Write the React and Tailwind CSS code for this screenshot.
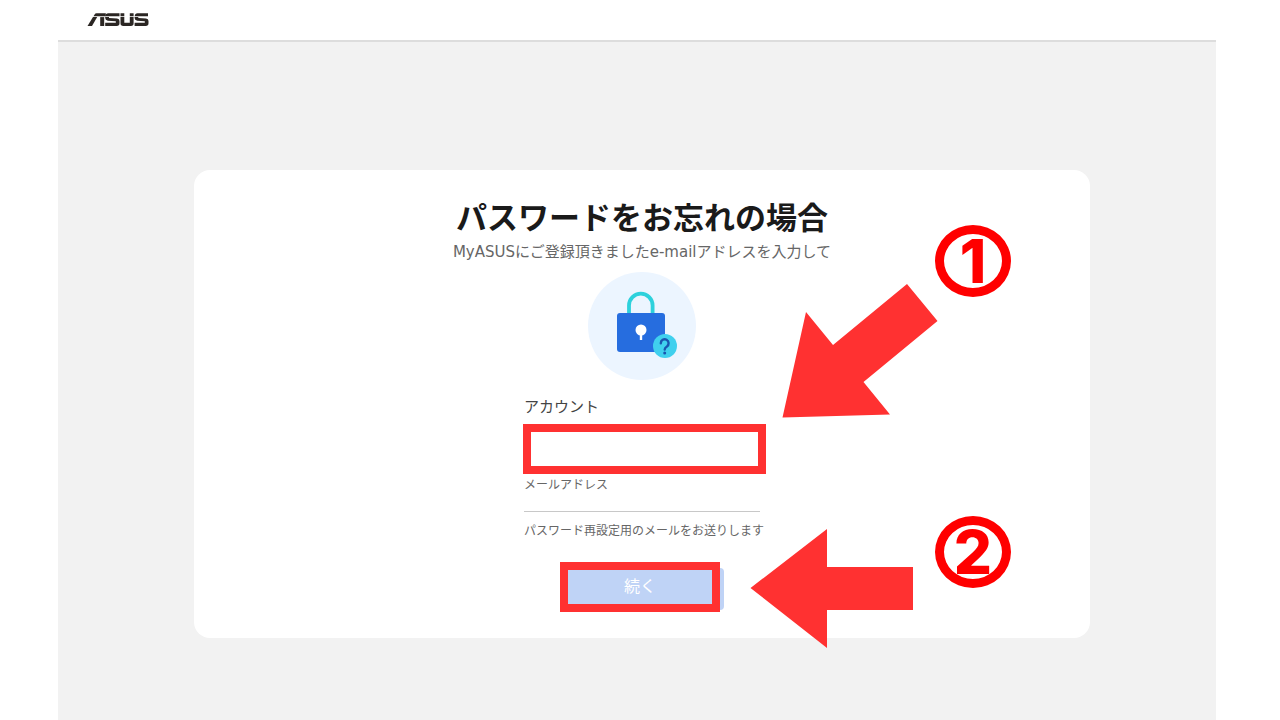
const RED = "#ff3131";

function AsusLogo() {
  return (
    <svg viewBox="0 0 62 14" className="h-3.5 w-[62px]" role="img" aria-label="ASUS">
      <g fill="#2b2623">
        <path d="M6.500 3.300 7.600 1.500Q8.200 0.300 9.600 0.300H18.800V3.300Z" />
        <path d="M6 4.100H10.200L5 13H0.500Z" />
        <path d="M13.200 4.100H17.200V13H13.200Z" />
        <path d="M18.300 3.300Q18.500 0.300 21.300 0.300H32.500V3.300Z" />
        <path d="M18.200 4.100H22V4.900L30 5.500Q32.500 5.800 32.500 8V10.300Q32.500 13 29.800 13H18.200V9.700H28.800V8.300L20.800 7.700Q18.200 7.400 18.200 5Z" />
        <path d="M42.800 0.300H46.600V3.300H42.800ZM33.500 0.300H37.300V3.300H33.500Z" />
        <path d="M33.500 4.100H37.300V9.700H42.800V4.100H46.600V10.300Q46.600 13 43.900 13H36.200Q33.500 13 33.500 10.300Z" />
        <path d="M47.700 3.300Q47.900 0.300 50.500 0.300H61V3.300Z" />
        <path d="M47.600 4.100H51.300V4.900L59 5.500Q61.500 5.800 61.500 8V10.300Q61.500 13 58.800 13H47.600V9.700H57.800V8.300L50.200 7.700Q47.600 7.400 47.600 5Z" />
      </g>
    </svg>
  );
}

function LockIllustration() {
  return (
    <svg viewBox="0 0 108 108" className="size-[108px]" aria-hidden="true">
      <circle cx="54" cy="54" r="54" fill="#ecf5ff" />
      <path d="M41 42V33.500a11.800 11.800 0 0 1 23.600 0V42" fill="none" stroke="#2dd1dc" strokeWidth="3.800" />
      <rect x="29" y="41" width="48" height="39" rx="3" fill="#266ddf" />
      <circle cx="53" cy="58" r="5.500" fill="#fff" />
      <path d="M53 60V68" stroke="#fff" strokeWidth="2.400" />
      <circle cx="77" cy="74" r="12" fill="#40d0ee" />
      <path d="M72.800 71.200a3.900 3.900 0 1 1 6.100 3.200c-1.600 1-2.200 1.600-2.200 3.200" fill="none" stroke="#1a55b0" strokeWidth="2.400" strokeLinecap="round" />
      <circle cx="76.700" cy="81" r="1.500" fill="#1a55b0" />
    </svg>
  );
}

function StepBadge({ children, className }) {
  return (
    <span className={`absolute flex h-[72px] w-[76px] items-center justify-center rounded-[50%] border-[9px] border-[#ff0000] font-['Inter',sans-serif] text-[60px] leading-none font-extrabold text-[#ff0000] ${className}`}>
      {children}
    </span>
  );
}

export default function App() {
  return (
    <div className="flex min-h-screen flex-col bg-white pr-16 pl-[58px] font-['DejaVu_Sans','Noto_Sans_CJK_JP',sans-serif]">
      <header className="flex h-[42px] items-center border-b-2 border-[#dddddd] px-[29px]">
        <a href="#"><AsusLogo /></a>
      </header>
      <main className="flex-1 bg-[#f2f2f2] pt-32 pr-[126px] pb-20 pl-[136px]">
        <section className="relative flex flex-col items-center rounded-2xl bg-white pt-6 pb-7">
          <h1 className="font-['Noto_Sans_CJK_JP',sans-serif] text-[31px] leading-11 font-bold text-[#1a1a1a]">パスワードをお忘れの場合</h1>
          <p className="text-[15px] leading-7 text-[#666666]">MyASUSにご登録頂きましたe-mailアドレスを入力して</p>
          <div className="mt-1.5"><LockIllustration /></div>
          <form className="mt-3 flex w-[236px] flex-col font-['Noto_Sans_CJK_JP',sans-serif]" onSubmit={(e) => e.preventDefault()}>
            <label htmlFor="account" className="text-[15px] leading-7 text-[#444444]">アカウント</label>
            <div className="relative mt-1 h-[50px]">
              <input id="account" type="text" className="h-full w-full bg-white px-3 text-[15px] outline-none" />
              <span className="pointer-events-none absolute inset-y-0 -right-1.5 -left-px border-8 border-[#ff3131]" />
            </div>
            <label htmlFor="mail" className="text-[12px] leading-5 text-[#666666]">メールアドレス</label>
            <input id="mail" type="email" className="h-[18px] border-b border-[#c8c8c8] text-[12px] outline-none" />
            <p className="mt-2 text-[12px] leading-5 whitespace-nowrap text-[#666666]">パスワード再設定用のメールをお送りします</p>
            <div className="relative mt-7 h-[42px] w-[164px] self-center">
              <button type="submit" className="h-full w-full rounded-sm bg-[#bfd3f6] pr-1 pb-2 text-[16px] leading-6 text-white">続く</button>
              <span className="pointer-events-none absolute -top-1.5 right-1 -bottom-0.5 left-0 border-8 border-[#ff3131]" />
            </div>
          </form>
          <StepBadge className="top-[55px] left-[calc(50%+293px)]">1</StepBadge>
          <svg viewBox="0 0 156 134" className="absolute top-[114px] left-[calc(50%+140px)] h-[134px] w-[156px]" aria-hidden="true">
            <path d="M0.500 133.500 24 28 51 61 125 0 155.500 37 81.500 98 108 130.500Z" fill={RED} />
          </svg>
          <StepBadge className="top-[346px] left-[calc(50%+293px)]">2</StepBadge>
          <svg viewBox="0 0 163 120" className="absolute top-[359px] left-[calc(50%+108px)] h-[120px] w-[163px]" aria-hidden="true">
            <path d="M0.500 59 77 0V38H163V81H77V119Z" fill={RED} />
          </svg>
        </section>
      </main>
    </div>
  );
}
